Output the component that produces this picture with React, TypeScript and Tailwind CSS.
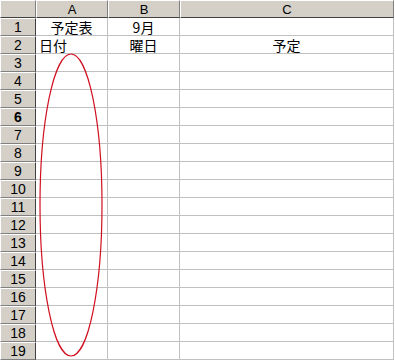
import React from 'react';

const cols = [
  { id: 'A', w: 'w-[72px]' },
  { id: 'B', w: 'w-[72px]' },
  { id: 'C', w: 'w-[214px]' },
];

const cells: Record<string, { text: string; align: string }> = {
  A1: { text: '予定表', align: 'justify-center' },
  B1: { text: '9月', align: 'justify-center' },
  A2: { text: '日付', align: 'justify-start pl-[3px]' },
  B2: { text: '曜日', align: 'justify-center' },
  C2: { text: '予定', align: 'justify-center' },
};

const rows = Array.from({ length: 19 }, (_, i) => i + 1);

export default function App() {
  return (
    <div
      className="relative w-[395px] h-[361px] overflow-hidden bg-white"
      style={{ fontFamily: '"Liberation Sans", "Noto Sans CJK JP", sans-serif' }}
    >
      {/* column headers */}
      <div className="flex h-[18px]">
        <div className="w-[36px] shrink-0 bg-[#d4d0c8] border-t border-l border-white border-r border-b border-r-[#808080] border-b-[#404040]" />
        {cols.map((c) => (
          <div
            key={c.id}
            className={`${c.w} shrink-0 bg-[#d4d0c8] border-t border-l border-white border-r border-r-[#808080] border-b border-b-[#404040] flex items-center justify-center text-[13px] leading-none text-black`}
          >
            {c.id}
          </div>
        ))}
      </div>

      {rows.map((r) => (
        <div key={r} className="flex h-[18px]">
          <div
            className={`w-[36px] shrink-0 bg-[#d4d0c8] border-t border-l border-white border-r border-r-[#404040] border-b border-b-[#808080] flex items-center justify-center text-[14px] leading-none text-black ${r === 6 ? 'font-bold' : ''}`}
          >
            {r}
          </div>
          {cols.map((c) => {
            const cell = cells[c.id + r];
            return (
              <div
                key={c.id}
                className={`${c.w} shrink-0 border-r border-b border-[#c0c0c0] flex items-center ${cell ? cell.align : ''} text-[14px] leading-none text-black`}
                style={{ fontFamily: '"Noto Sans CJK JP", sans-serif' }}
              >
                {cell ? cell.text : ''}
              </div>
            );
          })}
        </div>
      ))}

      {/* hand-drawn ellipse over column A */}
      <svg className="absolute left-0 top-0 pointer-events-none" width="395" height="361">
        <ellipse cx="71" cy="205" rx="31" ry="151" fill="none" stroke="#d01020" strokeWidth="1.2" />
      </svg>
    </div>
  );
}
